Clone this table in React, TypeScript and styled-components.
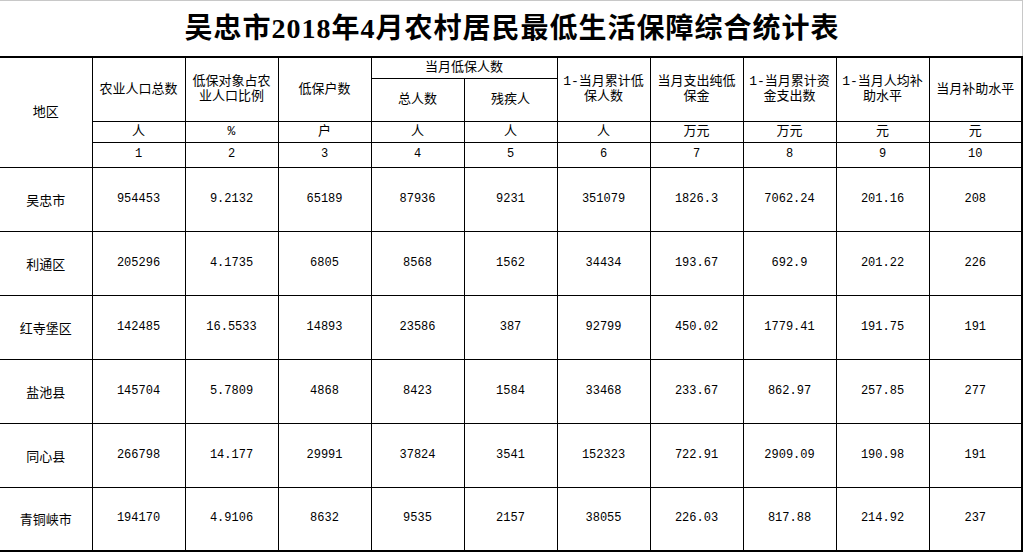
import React from 'react';
import styled, { createGlobalStyle } from 'styled-components';

const GlobalStyle = createGlobalStyle`
  html, body {
    margin: 0;
    padding: 0;
    background: #ffffff;
  }
`;

interface RowData {
  region: string;
  values: string[];
}

const units = ['人', '%', '户', '人', '人', '人', '万元', '万元', '元', '元'];

const rows: RowData[] = [
  {
    region: '吴忠市',
    values: ['954453', '9.2132', '65189', '87936', '9231', '351079', '1826.3', '7062.24', '201.16', '208'],
  },
  {
    region: '利通区',
    values: ['205296', '4.1735', '6805', '8568', '1562', '34434', '193.67', '692.9', '201.22', '226'],
  },
  {
    region: '红寺堡区',
    values: ['142485', '16.5533', '14893', '23586', '387', '92799', '450.02', '1779.41', '191.75', '191'],
  },
  {
    region: '盐池县',
    values: ['145704', '5.7809', '4868', '8423', '1584', '33468', '233.67', '862.97', '257.85', '277'],
  },
  {
    region: '同心县',
    values: ['266798', '14.177', '29991', '37824', '3541', '152323', '722.91', '2909.09', '190.98', '191'],
  },
  {
    region: '青铜峡市',
    values: ['194170', '4.9106', '8632', '9535', '2157', '38055', '226.03', '817.88', '214.92', '237'],
  },
];

export default function App() {
  return (
    <Page>
      <GlobalStyle />
      <TitleBar>
        <Title>吴忠市2018年4月农村居民最低生活保障综合统计表</Title>
      </TitleBar>
      <Sheet>
        <colgroup>
          <col style={{ width: 92 }} />
          {units.map((_, i) => (
            <col key={i} style={{ width: 93 }} />
          ))}
        </colgroup>
        <thead>
          <HeadRow $height={21}>
            <HeadCell rowSpan={4} $first>
              地区
            </HeadCell>
            <HeadCell rowSpan={2}>农业人口总数</HeadCell>
            <HeadCell rowSpan={2}>
              低保对象占农
              <br />
              业人口比例
            </HeadCell>
            <HeadCell rowSpan={2}>低保户数</HeadCell>
            <HeadCell colSpan={2}>当月低保人数</HeadCell>
            <HeadCell rowSpan={2}>
              1-当月累计低
              <br />
              保人数
            </HeadCell>
            <HeadCell rowSpan={2}>
              当月支出纯低
              <br />
              保金
            </HeadCell>
            <HeadCell rowSpan={2}>
              1-当月累计资
              <br />
              金支出数
            </HeadCell>
            <HeadCell rowSpan={2}>
              1-当月人均补
              <br />
              助水平
            </HeadCell>
            <HeadCell rowSpan={2}>当月补助水平</HeadCell>
          </HeadRow>
          <HeadRow $height={43}>
            <HeadCell>总人数</HeadCell>
            <HeadCell>残疾人</HeadCell>
          </HeadRow>
          <HeadRow $height={21}>
            {units.map((u, i) => (
              <HeadCell key={i}>{u}</HeadCell>
            ))}
          </HeadRow>
          <HeadRow $height={25}>
            {units.map((_, i) => (
              <HeadCell key={i} $mono>
                {i + 1}
              </HeadCell>
            ))}
          </HeadRow>
        </thead>
        <tbody>
          {rows.map((row) => (
            <DataRow key={row.region}>
              <Cell $first>{row.region}</Cell>
              {row.values.map((v, i) => (
                <Cell key={i} $mono>
                  {v}
                </Cell>
              ))}
            </DataRow>
          ))}
        </tbody>
      </Sheet>
    </Page>
  );
}

const Page = styled.div`
  width: 1024px;
  height: 552px;
  overflow: hidden;
  background: #ffffff;
  color: #000000;
`;

const TitleBar = styled.div`
  width: 1022px;
  height: 55px;
  border-top: 1px solid #c8c8c8;
  border-right: 1px solid #c8c8c8;
  display: flex;
  align-items: center;
  justify-content: center;
`;

const Title = styled.h1`
  margin: 0 0 0 2px;
  font-family: 'Liberation Serif', 'Noto Sans CJK SC', serif;
  font-size: 28px;
  font-weight: 700;
  line-height: 30px;
  letter-spacing: 1px;
  color: #000000;
`;

const Sheet = styled.table`
  border-collapse: collapse;
  table-layout: fixed;
  width: 1023px;
  border-top: 2px solid #000000;
  border-right: 2px solid #000000;
  border-bottom: 2px solid #000000;
  border-left: none;
`;

const HeadRow = styled.tr<{ $height: number }>`
  height: ${(p) => p.$height}px;
`;

const DataRow = styled.tr`
  height: 64px;
`;

const HeadCell = styled.th<{ $first?: boolean; $mono?: boolean }>`
  padding: 0 3px;
  border: 1px solid #000000;
  border-left: ${(p) => (p.$first ? 'none' : '1px solid #000000')};
  font-family: ${(p) =>
    p.$mono
      ? "'Liberation Mono', 'Noto Sans CJK SC', monospace"
      : "'Liberation Mono', 'Noto Sans CJK SC', sans-serif"};
  font-size: ${(p) => (p.$mono ? '12px' : '13px')};
  font-weight: 400;
  line-height: 15px;
  text-align: center;
  vertical-align: middle;
  white-space: nowrap;
`;

const Cell = styled.td<{ $first?: boolean; $mono?: boolean }>`
  padding: 0 3px;
  border: 1px solid #000000;
  border-left: ${(p) => (p.$first ? 'none' : '1px solid #000000')};
  font-family: ${(p) =>
    p.$mono
      ? "'Liberation Mono', monospace"
      : "'Noto Sans CJK SC', sans-serif"};
  font-size: ${(p) => (p.$mono ? '12px' : '13px')};
  line-height: 15px;
  text-align: center;
  vertical-align: middle;
  white-space: nowrap;
`;
